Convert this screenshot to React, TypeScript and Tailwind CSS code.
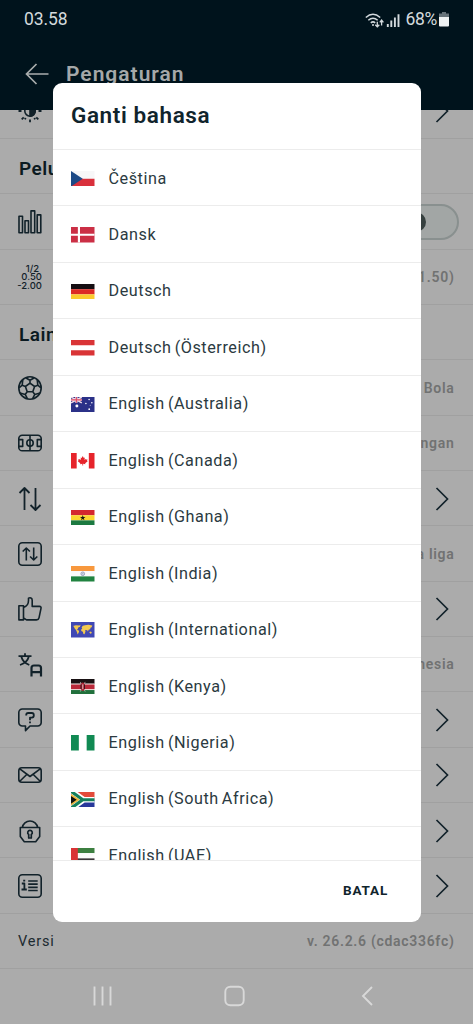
import type { ReactNode } from 'react';

const languages = [
  { code: 'cz', name: 'Čeština' },
  { code: 'dk', name: 'Dansk' },
  { code: 'de', name: 'Deutsch' },
  { code: 'at', name: 'Deutsch (Österreich)' },
  { code: 'au', name: 'English (Australia)' },
  { code: 'ca', name: 'English (Canada)' },
  { code: 'gh', name: 'English (Ghana)' },
  { code: 'in', name: 'English (India)' },
  { code: 'int', name: 'English (International)' },
  { code: 'ke', name: 'English (Kenya)' },
  { code: 'ng', name: 'English (Nigeria)' },
  { code: 'za', name: 'English (South Africa)' },
  { code: 'ae', name: 'English (UAE)' },
];

const flags: Record<string, ReactNode> = {
  cz: (
    <>
      <path fill="#f7f7f8" d="M0 0h24v8H0z" />
      <path fill="#d9303b" d="M0 8h24v8H0z" />
      <path fill="#1d4a86" d="M0 0l12 8-12 8z" />
    </>
  ),
  dk: (
    <>
      <path fill="#cb2f45" d="M0 0h24v16H0z" />
      <path fill="#fff" d="M7 0h2.2v16H7zM0 6.9h24v2.2H0z" />
    </>
  ),
  de: (
    <>
      <path fill="#150e12" d="M0 0h24v5.4H0z" />
      <path fill="#dc2a24" d="M0 5.4h24v5.3H0z" />
      <path fill="#fbcb2c" d="M0 10.7h24V16H0z" />
    </>
  ),
  at: (
    <>
      <path fill="#fff" d="M0 0h24v16H0z" />
      <path fill="#d93436" d="M0 0h24v5.3H0zM0 10.7h24V16H0z" />
    </>
  ),
  au: (
    <>
      <path fill="#2b3188" d="M0 0h24v16H0z" />
      <path stroke="#f3dfe8" strokeWidth="1.5" d="M0 0l11 6M11 0L0 6" />
      <path stroke="#f3dfe8" strokeWidth="2.4" d="M5.5 0v6M0 3h11" />
      <path stroke="#dc4a64" strokeWidth="1.1" d="M5.5 0v6M0 3h11" />
      <g fill="#fff">
        <circle cx="6" cy="9.3" r="1.5" />
        <circle cx="18.5" cy="2.6" r=".8" />
        <circle cx="15.2" cy="6.8" r=".8" />
        <circle cx="21.3" cy="6" r=".8" />
        <circle cx="18.6" cy="12.6" r=".9" />
        <circle cx="19.6" cy="8.6" r=".5" />
      </g>
    </>
  ),
  ca: (
    <>
      <path fill="#fff" d="M0 0h24v16H0z" />
      <path fill="#e6242b" d="M0 0h5.8v16H0zM18.2 0H24v16h-5.8z" />
      <path
        fill="#e6242b"
        d="M12 3.2l1.1 1.9 1-.4-.3 2.6 1.3-1.2.4.7 1.4-.2-.5 1.4.7.5-2.6 2.1.2.9-2.3-.3v1.8h-.8v-1.8l-2.3.3.2-.9L6.9 8.5l.7-.5-.5-1.4 1.4.2.4-.7 1.3 1.2-.3-2.6 1 .4z"
      />
    </>
  ),
  gh: (
    <>
      <path fill="#d4282f" d="M0 0h24v5.4H0z" />
      <path fill="#fbd62f" d="M0 5.4h24v5.3H0z" />
      <path fill="#1c7a41" d="M0 10.7h24V16H0z" />
      <path fill="#141814" d="M12 5.2l.7 2h2.1l-1.7 1.3.6 2.1-1.7-1.2-1.7 1.2.6-2.1-1.7-1.3h2.1z" />
    </>
  ),
  in: (
    <>
      <path fill="#f8983d" d="M0 0h24v5.3H0z" />
      <path fill="#fbfbfb" d="M0 5.3h24v5.4H0z" />
      <path fill="#218340" d="M0 10.7h24V16H0z" />
      <circle cx="12" cy="8" r="1.9" fill="#d3d8e4" stroke="#7c88ab" strokeWidth=".7" />
      <circle cx="12" cy="8" r=".5" fill="#7c88ab" />
    </>
  ),
  int: (
    <>
      <path fill="#4048b4" d="M0 0h24v16H0z" />
      <path
        fill="#f3c950"
        d="M2 4.2l3-.9 3.5.2 1.3-.6-.6 2-1.8.9-.6 1.6-1-.2 1.2 1.3 1.3.5-.4 1.8-1.1 2-.8-2.4-.9-2.2-1.5-1.7-.7-1.8zM10.800 5.600l1.200-1.800 2.300-.4 3.500-.6 4 .9-.7 1.700-1.200.5-.3 1.600-1.600.6-.7 1.700-.9-1.600-1.200.4-.9-.5.5 1.600-1 2.900-1.100-.3-.6-2.300-1.600-.6-.1-1.700 1.100-.9zM18.600 10.200l1.800-.4 1 1.500-1.700.8z"
      />
    </>
  ),
  ke: (
    <>
      <path fill="#181113" d="M0 0h24v5H0z" />
      <path fill="#f0dede" d="M0 4.7h24v6.7H0z" />
      <path fill="#b9293a" d="M0 5.7h24v4.7H0z" />
      <path fill="#21703c" d="M0 11.4h24V16H0z" />
      <path stroke="#d8c8c8" strokeWidth=".7" d="M9.5 3l5 10M14.5 3l-5 10" />
      <ellipse cx="12" cy="8" rx="2.1" ry="4.3" fill="#a92335" />
      <path stroke="#f0dede" strokeWidth=".8" d="M12 5.5v5" />
      <path stroke="#181113" strokeWidth=".8" d="M10.2 5.6v4.8M13.8 5.6v4.8" />
    </>
  ),
  ng: (
    <>
      <path fill="#fff" d="M0 0h24v16H0z" />
      <path fill="#118a53" d="M0 0h8v16H0zM16 0h8v16h-8z" />
    </>
  ),
  za: (
    <>
      <path fill="#e34b3a" d="M0 0h24v8H0z" />
      <path fill="#27379a" d="M0 8h24v8H0z" />
      <path stroke="#fff" strokeWidth="5.6" fill="none" d="M0-1.5L13 8h11M0 17.5L13 8" />
      <path fill="#f3bb3c" d="M0 2l9 6-9 6z" />
      <path stroke="#16805c" strokeWidth="3.2" fill="none" d="M0-.8L12 8h12M0 16.800L12 8" />
      <path fill="#12120f" d="M0 4l5.8 4L0 12z" />
    </>
  ),
  ae: (
    <>
      <path fill="#3c7f40" d="M0 0h24v5.3H0z" />
      <path fill="#fafafa" d="M0 5.3h24v5.4H0z" />
      <path fill="#3a3538" d="M0 10.7h24V16H0z" />
      <path fill="#d93436" d="M0 0h7v16H0z" />
    </>
  ),
};

function Flag({ code }: { code: string }) {
  return (
    <svg viewBox="0 0 24 16" preserveAspectRatio="none" className="h-[15.5px] w-[23.5px] shrink-0 overflow-hidden">
      {flags[code]}
    </svg>
  );
}

function Icon({ children }: { children: ReactNode }) {
  return (
    <svg
      viewBox="0 0 24 24"
      className="size-6 shrink-0 overflow-visible"
      fill="none"
      stroke="#12222a"
      strokeWidth="1.6"
      strokeLinejoin="round"
    >
      {children}
    </svg>
  );
}

const icons: Record<string, ReactNode> = {
  theme: (
    <Icon>
      <circle cx="12" cy="12" r="5.2" />
      <path fill="#12222a" d="M12 6.8a5.2 5.2 0 0 1 0 10.4z" />
      <path strokeWidth="1.8" d="M12 0v3M12 20.5v2.7M.5 12h3M20.500 12h3M3.700 3.700l2 2M18.300 18.300l2 2M3.700 20.300l2-2M18.300 5.700l2-2M7 20.300l.6-1.400M17 20.300l-.6-1.400" />
    </Icon>
  ),
  stats: (
    <Icon>
      <path d="M1 6.200h3.500v16.600H1zM7 10.800h3.500v12H7zM13 .9h3.700v21.900H13zM19.200 4.900h3.600v17.900h-3.600z" />
    </Icon>
  ),
  ball: (
    <Icon>
      <circle cx="12" cy="12" r="11.2" />
      <path d="M12 7.200l4.600 3.300-1.800 5.300H9.200l-1.800-5.300zM12 7.200V4.300M16.600 10.500l3.200-1.300M14.800 15.800l2 2.600M9.200 15.800l-2 2.600M7.400 10.500L4.200 9.200M7.600 1.800L12 4.300l4.400-2.500M19.200 3.600l.6 5.600 3.200 2.800M22 17l-5.200 1.400-2.300 4.500M9.500 22.900l-2.300-4.500L2 17M1 12l3.200-2.800.6-5.600" />
    </Icon>
  ),
  field: (
    <Icon>
      <rect x=".8" y="4.2" width="22.4" height="15.6" rx="3.4" />
      <circle cx="12" cy="12" r="3.2" />
      <path d="M12 4.2v15.600M.8 8.600h3.900v6.800H.8M23.200 8.600h-3.900v6.800h3.900" />
    </Icon>
  ),
  sort: (
    <Icon>
      <path strokeWidth="1.8" d="M6.500 23V1M1.500 6l5-5 5 5M17.500 1v22M12.500 18l5 5 5-5" />
    </Icon>
  ),
  sortBox: (
    <Icon>
      <rect x=".8" y=".8" width="22.4" height="22.4" rx="3.5" />
      <path d="M8.300 18.500V6M4.700 9.500L8.300 6l3.600 3.500M15.700 5.500V18M12.100 14.500l3.600 3.500 3.600-3.500" />
    </Icon>
  ),
  like: (
    <Icon>
      <path d="M.9 8.700h4.600v14.200H.9zM5.500 10.500c3-1 5-3.500 5-7V1.200c1.500-.8 3.700-.4 3.700 2v6.200h7.300c1.300 0 1.800.8 1.500 2l-2 9.500c-.3 1.400-1.200 2-2.500 2h-10L5.500 21" />
    </Icon>
  ),
  language: (
    <Icon>
      <path strokeWidth="1.8" d="M.5 3.200h13M7 .3v2.900M10.800 3.500C9.800 7.800 6.500 10.500 2 12M3.300 3.500c1 4 4 7 8 8.500" />
      <path strokeWidth="2.2" d="M13.500 23.500V15q0-2.500 2.500-2.500h4.500q2.500 0 2.500 2.500v8.500M13.500 19.200H23" />
    </Icon>
  ),
  help: (
    <Icon>
      <path d="M4.300 1h15.400a3.500 3.500 0 0 1 3.500 3.500v10a3.500 3.500 0 0 1-3.500 3.500H12l-4.500 4.600V18H4.300a3.500 3.500 0 0 1-3.500-3.500v-10A3.500 3.500 0 0 1 4.300 1z" />
      <path strokeWidth="1.8" d="M8.200 7.500V7q0-2 2-2h3.600q2 0 2 2v.6q0 2-2 2H12v2.700M12 13.400v1.900" />
    </Icon>
  ),
  mail: (
    <Icon>
      <rect x=".8" y="4.8" width="22.4" height="14.4" rx="3" />
      <path d="M1.800 5.800L12 13.500l10.200-7.700M1.800 18.200l7.200-7M22.200 18.200l-7.200-7" />
    </Icon>
  ),
  lock: (
    <Icon>
      <path d="M2.300 8.500h19.400v9l-4 5.200H6.300l-4-5.200zM4.300 8.500a7.800 7.800 0 0 1 15.400 0" />
      <path strokeWidth="1.7" d="M12 11.300a2.300 2.300 0 0 0-1.300 4.200V19h2.600v-3.500A2.300 2.300 0 0 0 12 11.300z" />
    </Icon>
  ),
  info: (
    <Icon>
      <rect x=".8" y=".8" width="22.4" height="22.4" rx="3.5" />
      <path strokeWidth="1.7" d="M10.200 7h9.500M10.200 10.200h9.500M10.200 13.300h9.500M10.200 16.500h9.500" />
      <path strokeWidth="1.8" d="M3.800 9.500h2.600v5.700M3.500 15.500h5.300M5.200 6.700h2" />
    </Icon>
  ),
};

function OddsIcon() {
  return (
    <div className="-ml-px w-[25px] shrink-0 whitespace-nowrap text-right font-['Inter',sans-serif] text-[9.5px] font-medium leading-[8.3px] text-[#12222a]">
      <div className="pr-[3px]">1/2</div>
      <div>0.50</div>
      <div>-2.00</div>
    </div>
  );
}

function Chevron() {
  return (
    <svg viewBox="0 0 14 24" className="mr-[5.5px] h-6 w-[14px]" fill="none" stroke="#12222a" strokeWidth="1.7">
      <path d="M1.500 1l11 11-11 11" />
    </svg>
  );
}

function Row({ icon, children }: { icon: ReactNode; children?: ReactNode }) {
  return (
    <div className="flex h-[55.35px] shrink-0 items-center justify-between border-b border-[#a0a0a0] pl-[18px] pr-[18.5px] pt-px">
      {icon}
      {children}
    </div>
  );
}

function Section({ title }: { title: string }) {
  return (
    <div className="flex h-[55.35px] shrink-0 items-center border-b border-[#a0a0a0] pl-[19px] pt-[7px]">
      <h2 className="text-[19px] font-semibold tracking-[0.5px] text-[#0b1a21]">{title}</h2>
    </div>
  );
}

function Value({ children }: { children: ReactNode }) {
  return <span className="text-[14px] font-semibold tracking-[0.7px] text-[#717272]">{children}</span>;
}

function StatusBar() {
  return (
    <div className="flex h-[39px] items-center justify-between pl-6 pr-6 text-[#d3dadd]">
      <span className="text-[17.5px] tracking-[-0.1px]">03.58</span>
      <div className="flex items-center">
        <svg viewBox="0 0 36 18" className="h-[18px] w-9" fill="none" stroke="#d3dadd" strokeWidth="1.5">
          <path d="M.8 6.500q7.200-6.400 14.400 0M3.300 9.300q4.700-4.200 9.400 0M5.800 11.900q2.200-2 4.400 0" />
          <circle cx="8" cy="14" r="1" fill="#d3dadd" stroke="none" />
          <path strokeWidth="1.3" d="M12.300 10.700v5M10.300 13.700l2 2.200 2-2.200M16.600 14.500v-5M14.800 11.300l1.800-2.200 1.800 2.200" />
          <path strokeWidth="1.9" d="M22.800 16v-3M26.300 16V9.600M29.900 16V6.600M33.500 16V3.200" />
        </svg>
        <span className="ml-[4px] text-[17.5px] tracking-[-0.3px]">68%</span>
        <svg viewBox="0 0 10 15" className="ml-[2px] h-[15px] w-2.5">
          <path fill="#66737a" d="M3 0h4v1.500h3V5H0V1.500h3z" />
          <path fill="#eef2f3" d="M0 5h10v8.500q0 1-1 1H1q-1 0-1-1z" />
        </svg>
      </div>
    </div>
  );
}

function NavigationBar() {
  return (
    <svg viewBox="0 1 473 56" className="h-14 w-full shrink-0" fill="none" stroke="#d8d8d8" strokeWidth="1.9">
      <path d="M94.500 18.500v19M102.500 18.500v19M110.500 18.500v19" />
      <rect x="225.300" y="18.800" width="18.400" height="18.400" rx="5" />
      <path d="M372 19l-9 9 9 9" />
    </svg>
  );
}

function LanguageDialog() {
  return (
    <div className="absolute left-[52.5px] top-[83px] flex h-[838.5px] w-[368px] flex-col overflow-hidden rounded-[9px] bg-white">
      <div className="flex h-[67px] shrink-0 items-center border-b border-[#ececec] pl-[18.5px]">
        <h1 className="text-[22.5px] font-semibold tracking-[0.6px] text-[#10242c]">Ganti bahasa</h1>
      </div>
      <ul className="min-h-0 flex-1 overflow-hidden">
        {languages.map((lang) => (
          <li
            key={lang.code}
            className="flex h-[56.45px] items-center gap-[14px] border-b border-[#ececec] pl-[18.5px] pt-[2px]"
          >
            <Flag code={lang.code} />
            <span className="whitespace-nowrap text-[16.2px] tracking-[0.55px] text-[#2b3a41] [word-spacing:-1.4px]">
              {lang.name}
            </span>
          </li>
        ))}
      </ul>
      <div className="flex h-[61.5px] shrink-0 items-center justify-end border-t border-[#ececec] pb-[3px] pr-[32.5px]">
        <button className="text-[13.5px] font-bold tracking-[0.8px] text-[#10242c]">BATAL</button>
      </div>
    </div>
  );
}

export default function App() {
  return (
    <div className="relative flex h-[1024px] w-[473px] flex-col overflow-hidden bg-[#ababab] font-['Roboto',sans-serif]">
      <header className="h-[109.5px] shrink-0 bg-[#00131c]">
        <StatusBar />
        <div className="flex h-[69px] items-center gap-[17px] pl-[25px]">
          <svg viewBox="0 0 24 22" className="h-[22px] w-6" fill="none" stroke="#a9adad" strokeWidth="1.7">
            <path d="M11.500 1L1.500 11l10 10M1.500 11H23.500" />
          </svg>
          <span className="pt-[2px] text-[21px] font-semibold tracking-[1px] text-[#a5a8a9]">Pengaturan</span>
        </div>
      </header>

      <main className="flex flex-1 flex-col">
        {/* first row is scrolled halfway under the header */}
        <div className="flex h-[29.5px] shrink-0 items-end overflow-hidden *:w-full">
          <Row icon={icons.theme}>
            <Chevron />
          </Row>
        </div>
        <Section title="Peluang" />
        <Row icon={icons.stats}>
          <div className="-mr-[4px] flex h-[36px] w-[60px] items-center rounded-full border-[2.5px] border-[#89908f] bg-[#a2a6a5] pl-[5px]">
            <div className="size-5 rounded-full bg-[#36403f]" />
          </div>
        </Row>
        <Row icon={<OddsIcon />}>
          <Value>(1.50)</Value>
        </Row>
        <Section title="Lainnya" />
        <Row icon={icons.ball}>
          <Value>Bola</Value>
        </Row>
        <Row icon={icons.field}>
          <Value>Pertandingan</Value>
        </Row>
        <Row icon={icons.sort}>
          <Chevron />
        </Row>
        <Row icon={icons.sortBox}>
          <Value>Semua liga</Value>
        </Row>
        <Row icon={icons.like}>
          <Chevron />
        </Row>
        <Row icon={icons.language}>
          <Value>Indonesia</Value>
        </Row>
        <Row icon={icons.help}>
          <Chevron />
        </Row>
        <Row icon={icons.mail}>
          <Chevron />
        </Row>
        <Row icon={icons.lock}>
          <Chevron />
        </Row>
        <Row icon={icons.info}>
          <Chevron />
        </Row>
        <Row icon={<span className="text-[14.5px] tracking-[0.8px] text-[#1c2a30]">Versi</span>}>
          <Value>v. 26.2.6 (cdac336fc)</Value>
        </Row>
        <NavigationBar />
      </main>

      <LanguageDialog />
    </div>
  );
}
